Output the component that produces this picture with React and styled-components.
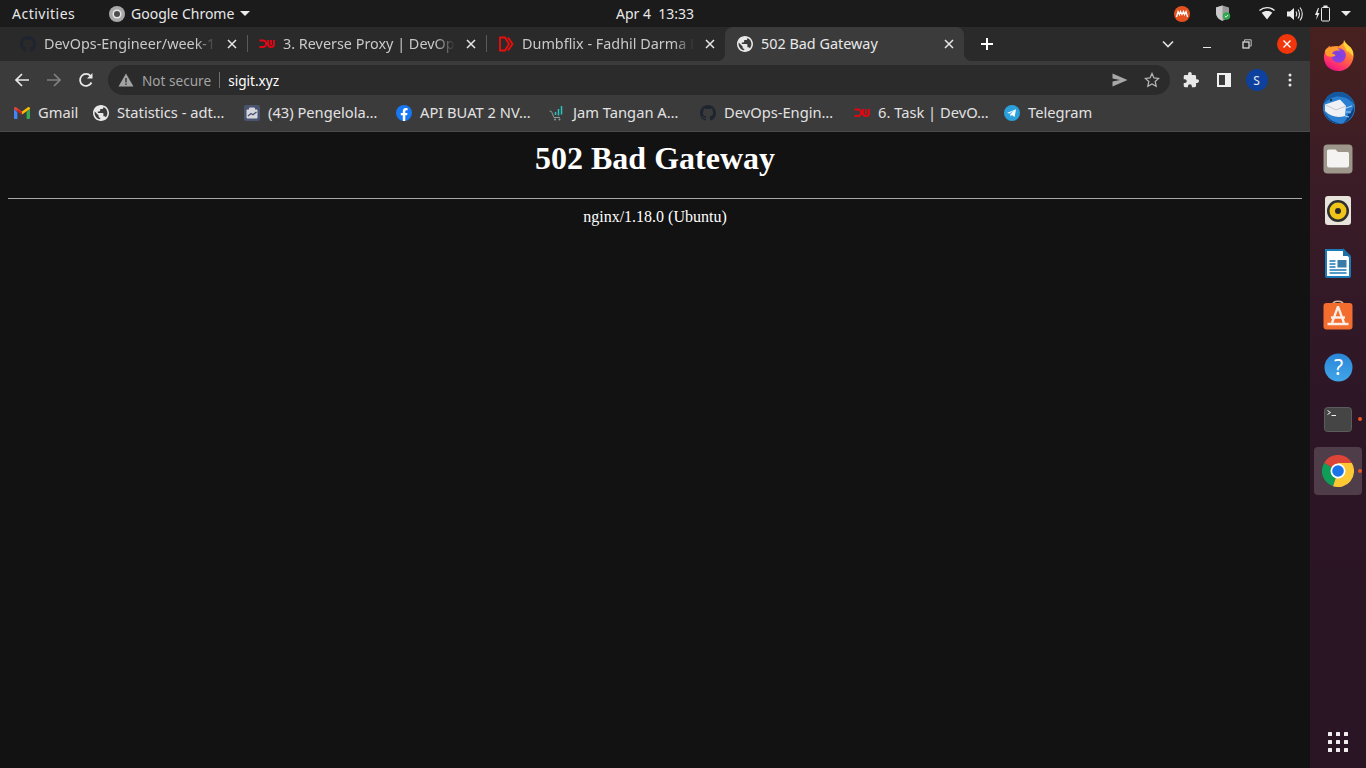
import React from 'react';
import styled, { createGlobalStyle } from 'styled-components';

const UI_FONT = '"Noto Sans", "Open Sans", sans-serif';

const GlobalStyle = createGlobalStyle`
    html, body {
        margin: 0;
        padding: 0;
        height: 100%;
        overflow: hidden;
        background: #121212;
    }
    #root {
        height: 100%;
    }
`;

const Desktop = styled.div`
    display: flex;
    flex-direction: column;
    width: 1366px;
    height: 768px;
    overflow: hidden;
    font-family: ${UI_FONT};
`;

const TopBar = styled.header`
    display: flex;
    align-items: center;
    flex: 0 0 27px;
    padding-left: 12px;
    background: #1b1b1b;
    color: #e8e8e8;
    font-size: 14px;
`;

const Activities = styled.span`
    width: 97px;
    letter-spacing: 0.5px;
`;

const AppMenu = styled.div`
    display: flex;
    align-items: center;
    gap: 6px;
    width: 507px;
`;

const Clock = styled.span`
    white-space: pre;
`;

const Tray = styled.div`
    display: flex;
    align-items: center;
    margin-left: auto;
    padding-right: 15px;
`;

const TraySlot = styled.span`
    display: flex;
    margin-left: ${(p) => p.$gap}px;
`;

const Body = styled.div`
    display: flex;
    flex: 1;
    min-height: 0;
`;

const Browser = styled.div`
    display: flex;
    flex-direction: column;
    flex: 1;
    min-width: 0;
`;

const TabStrip = styled.div`
    display: flex;
    align-items: center;
    flex: 0 0 34px;
    padding-left: 8px;
    background: #2a2a2a;
`;

const Tab = styled.div`
    position: relative;
    display: flex;
    align-items: center;
    flex: 0 0 239px;
    min-width: 0;
    box-sizing: border-box;
    height: 34px;
    padding: 0 7px 0 12px;
    gap: 8px;
    font-size: 14.4px;
    color: ${(p) => (p.$active ? '#e8e8e8' : '#c9c9c9')};
    background: ${(p) => (p.$active ? '#3b3b3b' : 'transparent')};
    border-radius: 8px 8px 0 0;
    &::before {
        content: ${(p) => (p.$active ? '""' : 'none')};
        position: absolute;
        left: -8px;
        bottom: 0;
        width: 8px;
        height: 8px;
        background: radial-gradient(circle at 0 0, transparent 8px, #3b3b3b 8.5px);
    }
    &::after {
        content: ${(p) => (p.$active || p.$sep ? '""' : 'none')};
        position: absolute;
        right: ${(p) => (p.$active ? '-8px' : '-1px')};
        bottom: ${(p) => (p.$active ? '0' : '9px')};
        width: ${(p) => (p.$active ? '8px' : '1px')};
        height: ${(p) => (p.$active ? '8px' : '17px')};
        background: ${(p) =>
            p.$active
                ? 'radial-gradient(circle at 100% 0, transparent 8px, #3b3b3b 8.5px)'
                : '#5a5a5a'};
    }
`;

const FavSlot = styled.span`
    display: flex;
    align-items: center;
    justify-content: center;
    flex: 0 0 16px;
    height: 16px;
`;

const TabTitle = styled.span`
    flex: 1;
    min-width: 0;
    margin-top: -2px;
    overflow: hidden;
    white-space: nowrap;
    mask-image: ${(p) =>
        p.$fade ? 'linear-gradient(to right, #000 calc(100% - 20px), transparent)' : 'none'};
`;

const CloseSlot = styled.span`
    display: flex;
    align-items: center;
    justify-content: center;
    flex: 0 0 16px;
    height: 16px;
`;

const NewTab = styled.span`
    display: flex;
    margin-left: 16px;
`;

const WindowControls = styled.div`
    display: flex;
    align-items: center;
    margin-left: auto;
    padding-right: 13px;
`;

const WinSlot = styled.span`
    display: flex;
    align-items: center;
    justify-content: center;
    width: 20px;
    height: 20px;
    margin-left: ${(p) => p.$gap}px;
`;

const Toolbar = styled.div`
    display: flex;
    align-items: center;
    flex: 0 0 38px;
    box-sizing: border-box;
    padding: 0 0 0 6px;
    background: #3b3b3b;
`;

const NavButton = styled.span`
    display: flex;
    align-items: center;
    justify-content: center;
    flex: 0 0 32px;
    height: 32px;
`;

const ToolButton = styled(NavButton)`
    flex-basis: 33px;
`;

const Omnibox = styled.div`
    display: flex;
    align-items: center;
    flex: 0 0 1062px;
    box-sizing: border-box;
    height: 30px;
    margin: 0 4px 0 6px;
    padding: 0 10px;
    background: #2b2b2b;
    border-radius: 15px;
    font-size: 13.6px;
`;

const NotSecure = styled.span`
    margin-left: 8px;
    color: #a3a3a3;
`;

const Divider = styled.span`
    width: 1px;
    height: 16px;
    margin: 0 8px;
    background: #6e6e6e;
`;

const Url = styled.span`
    color: #ffffff;
`;

const OmniActions = styled.div`
    display: flex;
    align-items: center;
    gap: 16px;
    margin-left: auto;
`;

const Avatar = styled.span`
    display: flex;
    align-items: center;
    justify-content: center;
    width: 22px;
    height: 22px;
    border-radius: 50%;
    background: #0d419d;
    color: #e8eaed;
    font-size: 12px;
`;

const Bookmarks = styled.div`
    display: flex;
    align-items: flex-start;
    flex: 0 0 33px;
    box-sizing: border-box;
    padding: 2px 0 0 6px;
    background: #3b3b3b;
    border-bottom: 1px solid #4a4a4a;
`;

const Bookmark = styled.div`
    display: flex;
    align-items: center;
    gap: 8px;
    height: 24px;
    padding: 0 8px;
    font-size: 14.7px;
    color: #e2e2e2;
    white-space: nowrap;
`;

const BookmarkLabel = styled.span`
    width: ${(p) => p.$w}px;
    margin-top: -2px;
`;

const Page = styled.main`
    flex: 1;
    padding: 8px;
    background: #121212;
    color: #ffffff;
    font-family: "Liberation Serif", serif;
`;

const Heading = styled.h1`
    margin: 0 0 21px;
    font-size: 32px;
    line-height: 37px;
    font-weight: 700;
    text-align: center;
`;

const Rule = styled.hr`
    height: 0;
    margin: 0 0 9px;
    border: 0;
    border-top: 1px solid #a8a8a8;
`;

const Footer = styled.div`
    font-size: 16px;
    line-height: 18px;
    text-align: center;
`;

const Dock = styled.aside`
    display: flex;
    flex-direction: column;
    align-items: center;
    flex: 0 0 56px;
    gap: 4px;
    padding-top: 4px;
    background: linear-gradient(to bottom, #47211f 0%, #3a1c27 22%, #2d1626 50%, #291524 100%);
`;

const DockItem = styled.div`
    position: relative;
    display: flex;
    align-items: center;
    justify-content: center;
    width: 48px;
    height: 48px;
    border-radius: 4px;
    background: ${(p) => (p.$active ? 'rgba(255, 255, 255, 0.17)' : 'transparent')};
`;

const RunDot = styled.span`
    position: absolute;
    right: 0;
    top: 22px;
    width: 4px;
    height: 4px;
    border-radius: 50%;
    background: #e95420;
`;

const AppGrid = styled.div`
    display: grid;
    grid-template-columns: repeat(3, 4px);
    gap: 4px;
    margin-top: auto;
    margin-bottom: 16px;
`;

const AppDot = styled.span`
    width: 4px;
    height: 4px;
    background: #f2eef0;
    border-radius: 0.5px;
`;

const GLOBE =
    'M12 2C6.48 2 2 6.48 2 12s4.48 10 10 10 10-4.48 10-10S17.52 2 12 2zm-1 17.93c-3.95-.49-7-3.85-7-7.93 0-.62.08-1.21.21-1.79L9 15v1c0 1.1.9 2 2 2v1.93zm6.9-2.54c-.26-.81-1-1.39-1.9-1.39h-1v-3c0-.55-.45-1-1-1H8v-2h2c.55 0 1-.45 1-1V7h2c1.1 0 2-.9 2-2v-.41c2.93 1.19 5 4.06 5 7.41 0 2.08-.8 3.97-2.1 5.39z';

const Globe = () => (
    <svg width="16" height="16" viewBox="2 2 20 20">
        <path d={GLOBE} fill="#e8e8e8" />
    </svg>
);

const CloseIcon = () => (
    <svg width="10" height="10" viewBox="0 0 10 10">
        <path d="M1 1l8 8M9 1l-8 8" stroke="#e8e8e8" strokeWidth="1.5" />
    </svg>
);

const DevLogo = () => (
    <svg width="16" height="10" viewBox="0 0 16 10">
        <path
            d="M0.5 1.5h3.5a3.2 3.2 0 0 1 0 6.5H0.5M9 1v4a3 3 0 0 0 6 0V1M12 1v5"
            fill="none"
            stroke="#e30613"
            strokeWidth="1.9"
        />
    </svg>
);

const DumbflixLogo = () => (
    <svg width="16" height="16" viewBox="0 0 16 16">
        <path
            d="M2 1.5h5l4 6.500-4 6.500H2zM10 1.500l4.500 6.500-4.500 6.500"
            fill="none"
            stroke="#f00d0d"
            strokeWidth="1.800"
        />
    </svg>
);

const GithubFav = () => (
    <svg width="16" height="16" viewBox="0 0 16 16">
        <path
            fill="#1e2430"
            d="M8 0C3.58 0 0 3.58 0 8c0 3.54 2.29 6.53 5.47 7.59.4.07.55-.17.55-.38 0-.19-.01-.82-.01-1.49-2.010.37-2.530-.49-2.690-.94-.09-.23-.48-.94-.82-1.130-.28-.15-.68-.52-.01-.53.630-.01 1.080.58 1.230.82.720 1.210 1.870.87 2.330.66.070-.52.280-.87.510-1.070-1.780-.2-3.640-.89-3.640-3.950 0-.87.310-1.590.820-2.150-.08-.2-.36-1.020.08-2.120 0 0 .67-.21 2.200.82.640-.18 1.320-.27 2-.27s1.360.09 2 .27c1.530-1.040 2.200-.82 2.200-.82.440 1.100.160 1.920.080 2.120.510.560.820 1.270.820 2.150 0 3.070-1.870 3.750-3.650 3.950.290.250.540.730.540 1.480 0 1.070-.010 1.930-.010 2.200 0 .210.150.460.550.380A8.010 8.010 0 0 0 16 8c0-4.420-3.580-8-8-8z"
        />
    </svg>
);

const GmailIcon = () => (
    <svg width="16" height="12" viewBox="0 0 16 12">
        <path d="M0 2v9a1 1 0 0 0 1 1h2.400V5.200z" fill="#4285f4" />
        <path d="M12.600 5.200V12H15a1 1 0 0 0 1-1V2z" fill="#34a853" />
        <path d="M0 1.600C0 .4 1.400-.4 2.400.4L8 4.600v3L0 2z" fill="#ea4335" />
        <path d="M8 4.600L13.600.4c1-.8 2.400 0 2.400 1.200V2L8 7.600z" fill="#fbbc04" />
        <path d="M3.400 2l4.600 3.400V7.600L3.400 4.400z" fill="#c5221f" />
    </svg>
);

const PengelolaIcon = () => (
    <svg width="16" height="16" viewBox="0 0 16 16">
        <rect width="16" height="16" rx="2" fill="#4a5470" />
        <path d="M3 5h10v8H3zM5.500 5V3h5v2" fill="#d5d7dd" stroke="#d5d7dd" strokeWidth="1" />
        <path d="M4 11l3-2.500 2 1.200L12.500 7" fill="none" stroke="#4a5470" strokeWidth="1.300" />
    </svg>
);

const FacebookIcon = () => (
    <svg width="16" height="16" viewBox="0 0 16 16">
        <circle cx="8" cy="8" r="8" fill="#1877f2" />
        <path
            d="M11.100 10.300l.4-2.300H9.300V6.500c0-.6.3-1.200 1.300-1.200h1V3.300s-.9-.2-1.800-.2c-1.800 0-3 1.100-3 3.100V8h-2v2.300h2V16h2.500v-5.700z"
            fill="#ffffff"
        />
    </svg>
);

const CartIcon = () => (
    <svg width="16" height="16" viewBox="0 0 16 16">
        <path d="M0.500 6l2 .5L5 12.500h6" fill="none" stroke="#8b9a98" strokeWidth="1" />
        <circle cx="6" cy="14.500" r="1" fill="#8b9a98" />
        <circle cx="10.500" cy="14.500" r="1" fill="#8b9a98" />
        <path d="M6.500 7v3M9.500 4v6.500M12.500 1v8.500" stroke="#27c4c0" strokeWidth="1.500" />
    </svg>
);

const TelegramIcon = () => (
    <svg width="16" height="16" viewBox="0 0 16 16">
        <circle cx="8" cy="8" r="8" fill="#2aa1dc" />
        <path d="M3 8l9-3.700-1.400 7.700-2.700-2-1.400 1.400-.3-2.400 4-3.400-5 3z" fill="#ffffff" />
    </svg>
);

const ChromeMono = () => (
    <svg width="16" height="16" viewBox="0 0 16 16">
        <circle cx="8" cy="8" r="8" fill="#a9a9a9" />
        <circle cx="8" cy="8" r="4.500" fill="#e6e6e6" />
        <circle cx="8" cy="8" r="3" fill="#4c4c4c" />
    </svg>
);

const Caret = () => (
    <svg width="10" height="5" viewBox="0 0 10 5">
        <path d="M0 0h10L5 5z" fill="#ececec" />
    </svg>
);

const UbuntuOneIcon = () => (
    <svg width="16" height="16" viewBox="0 0 16 16">
        <circle cx="8" cy="8" r="8" fill="#e4511f" />
        <path
            d="M2.500 11l1.500-5.500 1.500 3 1-3 1.500 3 1.500-3 1 3 1.500-3 1.500 5.500"
            fill="none"
            stroke="#ffffff"
            strokeWidth="1.300"
        />
    </svg>
);

const ShieldIcon = () => (
    <svg width="15" height="17" viewBox="0 0 15 17">
        <path d="M6.500 0.500L13 2.500v5c0 4-2.800 7-6.500 8.500C2.800 14.500 0 11.500 0 7.500v-5z" fill="#9a9a9a" />
        <path d="M6.500 0.500L0 2.500v5c0 4 2.800 7 6.500 8.500z" fill="#c9c9c9" />
        <circle cx="10.500" cy="11" r="3.700" fill="#2fa84f" />
        <path d="M8.800 11l1.200 1.200 2-2.200" fill="none" stroke="#ffffff" strokeWidth="0.900" />
    </svg>
);

const WifiIcon = () => (
    <svg width="16" height="13" viewBox="0 0 16 13">
        <path d="M8 12.500L2.700 5.700C5.800 3.500 10.200 3.500 13.300 5.700z" fill="#ececec" />
        <path d="M0.500 3.500C4.800-.3 11.200-.3 15.500 3.500" fill="none" stroke="#ececec" strokeWidth="1.300" />
    </svg>
);

const VolumeIcon = () => (
    <svg width="16" height="16" viewBox="0 0 16 16">
        <path d="M0 5.500h3L7 2v12L3 10.500H0z" fill="#ececec" />
        <path
            d="M9 5.500c1 1.500 1 3.500 0 5M11 3.500c2 2.500 2 6.500 0 9M13 1.500c3 3.500 3 9.500 0 13"
            fill="none"
            stroke="#ececec"
            strokeWidth="1.100"
        />
    </svg>
);

const BatteryIcon = () => (
    <svg width="15" height="17" viewBox="0 0 15 17">
        <path d="M3 2L0 9h2l-1 5 3.500-7H2.500L4 2z" fill="#ececec" transform="translate(0 1)" />
        <rect x="6.500" y="2.500" width="8" height="13.500" rx="1" fill="none" stroke="#ececec" strokeWidth="1" />
        <rect x="8.500" y="0.500" width="4" height="2" fill="#ececec" />
    </svg>
);

const ChevronDown = () => (
    <svg width="12" height="8" viewBox="0 0 12 8">
        <path d="M1 1.500l5 5 5-5" fill="none" stroke="#e0e0e0" strokeWidth="1.700" />
    </svg>
);

const ExtensionIcon = () => (
    <svg width="16" height="16" viewBox="1 1 22 22">
        <path
            fill="#e8e8e8"
            d="M20.500 11H19V7c0-1.100-.9-2-2-2h-4V3.500C13 2.120 11.880 1 10.500 1S8 2.120 8 3.500V5H4c-1.100 0-1.990.9-1.990 2v3.800H3.500c1.490 0 2.700 1.210 2.700 2.700s-1.210 2.700-2.700 2.700H2V20c0 1.100.9 2 2 2h3.800v-1.500c0-1.490 1.210-2.700 2.700-2.700 1.490 0 2.700 1.210 2.700 2.700V22H17c1.100 0 2-.9 2-2v-4h1.500c1.380 0 2.500-1.120 2.500-2.500S21.880 11 20.500 11z"
        />
    </svg>
);

const FirefoxIcon = () => (
    <svg width="31" height="33" viewBox="0 0 34 36">
        <defs>
            <linearGradient id="ffBody" x1="0.800" y1="0.100" x2="0.300" y2="1">
                <stop offset="0" stopColor="#ffbd2e" />
                <stop offset="0.400" stopColor="#ff7139" />
                <stop offset="0.800" stopColor="#ff2d6f" />
                <stop offset="1" stopColor="#e31587" />
            </linearGradient>
            <radialGradient id="ffCore" cx="0.500" cy="0.500" r="0.600">
                <stop offset="0" stopColor="#7543e3" />
                <stop offset="1" stopColor="#9a3ddb" />
            </radialGradient>
        </defs>
        <path
            d="M23 1c1 3 4 5 7 8 4 4 4 9 3 13-2 8-9 13-16 13C8 35 1 29 1 20c0-3 1-6 2-8 1-2 3-4 5-5-1 2-1 3-1 4 3-3 7-4 10-3 3-2 6-3 6-7z"
            fill="url(#ffBody)"
        />
        <path d="M23 1c1 3 4 5 7 8 3 3 3 7 3 10-2-3-4-5-7-6-1-3-3-5-3-7z" fill="#ffd43a" />
        <circle cx="17" cy="18" r="8" fill="url(#ffCore)" />
        <path d="M2 13c2-4 9-6 13-4 1 1 3 2 4 4-4-1-8 0-9 3 2 0 3 1 4 2-3 2-9 2-11-1z" fill="#ff9a2e" />
    </svg>
);

const ThunderbirdIcon = () => (
    <svg width="33" height="33" viewBox="0 0 33 33">
        <circle cx="17" cy="17" r="16" fill="#2a7fd0" />
        <path d="M1.500 13C3 5 11 0 18 1c7 .5 13 6 14.500 13-3-4-7-7-12-8-2 0-5-1-8 0-4 1-7 3-11 7z" fill="#14589f" />
        <path d="M32 15c1 8-4 15-11 17 4-3 5-6 5-9 1 0 3 0 3-2 1-1 2-4 3-6z" fill="#0e3f7c" />
        <path d="M3 13.500l15-5 6 6.500-1 10c-7 2-14 1-20-5z" fill="#eef0f3" />
        <path d="M3 13.500L14 19l10-4" fill="none" stroke="#c3c8d0" strokeWidth="1" />
        <path d="M2 20c3 7 9 12 17 12.500-8 1-15-4-17-12.500z" fill="#0c3d7d" />
        <path d="M24 17l6-2M24 21l5 0M23 25l4 1" stroke="#9fd0f2" strokeWidth="1.200" />
        <circle cx="9" cy="9" r="1" fill="#1a1a1a" />
    </svg>
);

const FilesIcon = () => (
    <svg width="30" height="30" viewBox="0 0 30 30">
        <rect x="0.500" y="0.500" width="29" height="29" rx="4" fill="#9c978a" />
        <path
            d="M4 7a1.500 1.500 0 0 1 1.500-1.500h7l2.500 2.500h9.500A1.500 1.500 0 0 1 26 9.500v12a2 2 0 0 1-2 2H6a2 2 0 0 1-2-2z"
            fill="#f4f3f1"
        />
    </svg>
);

const RhythmboxIcon = () => (
    <svg width="26" height="30" viewBox="0 0 26 30">
        <rect width="26" height="29" rx="3" fill="#e8e4db" />
        <circle cx="13" cy="15" r="11" fill="#2f2f2f" />
        <circle cx="13" cy="15" r="8.500" fill="#f0c419" />
        <circle cx="13" cy="15" r="3" fill="#2a2a2a" />
    </svg>
);

const WriterIcon = () => (
    <svg width="26" height="30" viewBox="0 0 26 30">
        <path d="M1 2h17l7 7v19a1 1 0 0 1-1 1H2a1 1 0 0 1-1-1z" fill="#ffffff" stroke="#1b7ab8" strokeWidth="2" />
        <path d="M18 0l8 8h-8z" fill="#1b6fa8" />
        <path d="M4.500 13h6M4.500 16h6M4.500 19h6M4.500 22h17M4.500 25h17" stroke="#1b7ab8" strokeWidth="1.500" />
        <rect x="12.500" y="12" width="9" height="7.500" fill="#3a7ca8" />
    </svg>
);

const SoftwareIcon = () => (
    <svg width="30" height="30" viewBox="0 0 30 30">
        <path d="M9.500 5C10 0 20 0 20.500 5" fill="none" stroke="#d9b79d" strokeWidth="1.500" />
        <rect x="0.500" y="3" width="29" height="26.500" rx="3" fill="#f26d2e" />
        <path d="M15 6.500L9 23M15 6.500l6 16.500M4.500 24h21M8 17.500h14" fill="none" stroke="#fbeee6" strokeWidth="2.300" />
    </svg>
);

const HelpIcon = () => (
    <svg width="29" height="29" viewBox="0 0 29 29">
        <defs>
            <linearGradient id="helpFill" x1="0" y1="0" x2="0" y2="1">
                <stop offset="0" stopColor="#2a86d8" />
                <stop offset="1" stopColor="#41a5e8" />
            </linearGradient>
        </defs>
        <circle cx="14.500" cy="14.500" r="14" fill="url(#helpFill)" />
        <text
            x="14.500"
            y="22"
            textAnchor="middle"
            fontFamily="'Noto Sans', sans-serif"
            fontSize="21"
            fill="#ffffff"
        >
            ?
        </text>
    </svg>
);

const TerminalIcon = () => (
    <svg width="28" height="25" viewBox="0 0 28 25">
        <rect x="0.500" y="0.500" width="27" height="24" rx="3" fill="#454545" stroke="#5c5c5c" />
        <path d="M3.500 3.500l3 2-3 2M7.500 8.500h4.500" fill="none" stroke="#f0f0f0" strokeWidth="1" />
    </svg>
);

const ChromeIcon = () => (
    <svg width="32" height="32" viewBox="0 0 32 32">
        <path d="M16 16L2.100 8A16 16 0 0 1 29.900 8H16z" fill="#db4437" />
        <path d="M16 16L2.100 8A16 16 0 0 0 11 31.200z" fill="#0f9d58" />
        <path d="M16 8H29.900A16 16 0 0 1 11 31.200L16 16z" fill="#fcc934" />
        <circle cx="16" cy="16" r="7.500" fill="#ffffff" />
        <circle cx="16" cy="16" r="5.800" fill="#1a73e8" />
    </svg>
);

const tabs = [
    { title: 'DevOps-Engineer/week-1', icon: <GithubFav />, fade: true, sep: true },
    { title: '3. Reverse Proxy | DevOps', icon: <DevLogo />, fade: true, sep: true },
    { title: 'Dumbflix - Fadhil Darma Putera', icon: <DumbflixLogo />, fade: true },
    { title: '502 Bad Gateway', icon: <Globe />, active: true },
];

const bookmarks = [
    { label: 'Gmail', width: 39, icon: <GmailIcon /> },
    { label: 'Statistics - adt…', width: 111, icon: <Globe /> },
    { label: '(43) Pengelola…', width: 112, icon: <PengelolaIcon /> },
    { label: 'API BUAT 2 NV…', width: 113, icon: <FacebookIcon /> },
    { label: 'Jam Tangan A…', width: 111, icon: <CartIcon /> },
    { label: 'DevOps-Engin…', width: 114, icon: <GithubFav /> },
    { label: '6. Task | DevO…', width: 110, icon: <DevLogo /> },
    { label: 'Telegram', width: 64, icon: <TelegramIcon /> },
];

const dockApps = [
    { id: 'firefox', icon: <FirefoxIcon /> },
    { id: 'thunderbird', icon: <ThunderbirdIcon /> },
    { id: 'files', icon: <FilesIcon /> },
    { id: 'rhythmbox', icon: <RhythmboxIcon /> },
    { id: 'writer', icon: <WriterIcon /> },
    { id: 'software', icon: <SoftwareIcon /> },
    { id: 'help', icon: <HelpIcon /> },
    { id: 'terminal', icon: <TerminalIcon />, running: true },
    { id: 'chrome', icon: <ChromeIcon />, running: true, active: true },
];

const App = () => (
    <Desktop>
        <GlobalStyle />
        <TopBar>
            <Activities>Activities</Activities>
            <AppMenu>
                <ChromeMono />
                <span>Google Chrome</span>
                <Caret />
            </AppMenu>
            <Clock>Apr 4  13:33</Clock>
            <Tray>
                <TraySlot><UbuntuOneIcon /></TraySlot>
                <TraySlot $gap={26}><ShieldIcon /></TraySlot>
                <TraySlot $gap={28}><WifiIcon /></TraySlot>
                <TraySlot $gap={12}><VolumeIcon /></TraySlot>
                <TraySlot $gap={12}><BatteryIcon /></TraySlot>
                <TraySlot $gap={11}><Caret /></TraySlot>
            </Tray>
        </TopBar>
        <Body>
            <Browser>
                <TabStrip>
                    {tabs.map((tab) => (
                        <Tab key={tab.title} $active={tab.active} $sep={tab.sep}>
                            <FavSlot>{tab.icon}</FavSlot>
                            <TabTitle $fade={tab.fade}>{tab.title}</TabTitle>
                            <CloseSlot><CloseIcon /></CloseSlot>
                        </Tab>
                    ))}
                    <NewTab>
                        <svg width="14" height="14" viewBox="0 0 14 14">
                            <path d="M7 1v12M1 7h12" stroke="#ffffff" strokeWidth="2" />
                        </svg>
                    </NewTab>
                    <WindowControls>
                        <WinSlot><ChevronDown /></WinSlot>
                        <WinSlot $gap={19}>
                            <svg width="10" height="10" viewBox="0 0 10 10">
                                <path d="M1 8.500h8" stroke="#e8e8e8" strokeWidth="1" />
                            </svg>
                        </WinSlot>
                        <WinSlot $gap={20}>
                            <svg width="10" height="10" viewBox="0 0 10 10">
                                <path d="M2.500 2.500V0.800h6.700v6.200H7.500" fill="none" stroke="#c0c0c0" strokeWidth="1" />
                                <rect x="1" y="3" width="6" height="6" fill="none" stroke="#e8e8e8" strokeWidth="1.200" />
                            </svg>
                        </WinSlot>
                        <WinSlot $gap={20}>
                            <svg width="20" height="20" viewBox="0 0 20 20">
                                <circle cx="10" cy="10" r="10" fill="#f0360a" />
                                <path d="M6.500 6.500l7 7M13.500 6.500l-7 7" stroke="#ffffff" strokeWidth="1.400" />
                            </svg>
                        </WinSlot>
                    </WindowControls>
                </TabStrip>
                <Toolbar>
                    <NavButton>
                        <svg width="16" height="16" viewBox="0 0 16 16">
                            <path d="M15 8H2M8 2L2 8l6 6" fill="none" stroke="#e8e8e8" strokeWidth="1.700" />
                        </svg>
                    </NavButton>
                    <NavButton>
                        <svg width="16" height="16" viewBox="0 0 16 16">
                            <path d="M1 8h13M8 2l6 6-6 6" fill="none" stroke="#808080" strokeWidth="1.700" />
                        </svg>
                    </NavButton>
                    <NavButton>
                        <svg width="16" height="16" viewBox="0 0 16 16">
                            <path d="M13.500 10.500A6 6 0 1 1 12.600 4" fill="none" stroke="#e8e8e8" strokeWidth="1.800" />
                            <path d="M14.500 1v5.500H9z" fill="#e8e8e8" />
                        </svg>
                    </NavButton>
                    <Omnibox>
                        <svg width="16" height="14" viewBox="0 0 16 14">
                            <path d="M8 0.500L15.500 13.500H0.500z" fill="#a3a3a3" />
                            <path d="M8 5v4.500M8 10.500v1.500" stroke="#2b2b2b" strokeWidth="1.300" />
                        </svg>
                        <NotSecure>Not secure</NotSecure>
                        <Divider />
                        <Url>sigit.xyz</Url>
                        <OmniActions>
                            <svg width="16" height="14" viewBox="0 0 16 14">
                                <path d="M0.500 0.500L15.500 7 0.500 13.500V8.500L8 7 0.500 5.500z" fill="#a8a8a8" />
                            </svg>
                            <svg width="16" height="16" viewBox="0 0 16 16">
                                <path
                                    d="M8 1.500l2 4.400 4.700.5-3.500 3.200 1 4.700L8 11.900l-4.200 2.400 1-4.700L1.300 6.400 6 5.900z"
                                    fill="none"
                                    stroke="#b5b5b5"
                                    strokeWidth="1.300"
                                />
                            </svg>
                        </OmniActions>
                    </Omnibox>
                    <ToolButton><ExtensionIcon /></ToolButton>
                    <ToolButton>
                        <svg width="14" height="14" viewBox="0 0 14 14">
                            <rect x="1" y="1" width="12" height="12" fill="none" stroke="#f0f0f0" strokeWidth="2" />
                            <rect x="8" y="1" width="5" height="12" fill="#f0f0f0" />
                        </svg>
                    </ToolButton>
                    <ToolButton><Avatar>S</Avatar></ToolButton>
                    <ToolButton>
                        <svg width="4" height="14" viewBox="0 0 4 14">
                            <circle cx="2" cy="2" r="1.500" fill="#e8e8e8" />
                            <circle cx="2" cy="7" r="1.500" fill="#e8e8e8" />
                            <circle cx="2" cy="12" r="1.500" fill="#e8e8e8" />
                        </svg>
                    </ToolButton>
                </Toolbar>
                <Bookmarks>
                    {bookmarks.map((mark) => (
                        <Bookmark key={mark.label}>
                            <FavSlot>{mark.icon}</FavSlot>
                            <BookmarkLabel $w={mark.width}>{mark.label}</BookmarkLabel>
                        </Bookmark>
                    ))}
                </Bookmarks>
                <Page>
                    <Heading>502 Bad Gateway</Heading>
                    <Rule />
                    <Footer>nginx/1.18.0 (Ubuntu)</Footer>
                </Page>
            </Browser>
            <Dock>
                {dockApps.map((app) => (
                    <DockItem key={app.id} $active={app.active}>
                        {app.icon}
                        {app.running && <RunDot />}
                    </DockItem>
                ))}
                <AppGrid>
                    {Array.from({ length: 9 }, (_, i) => (
                        <AppDot key={i} />
                    ))}
                </AppGrid>
            </Dock>
        </Body>
    </Desktop>
);

export default App;
